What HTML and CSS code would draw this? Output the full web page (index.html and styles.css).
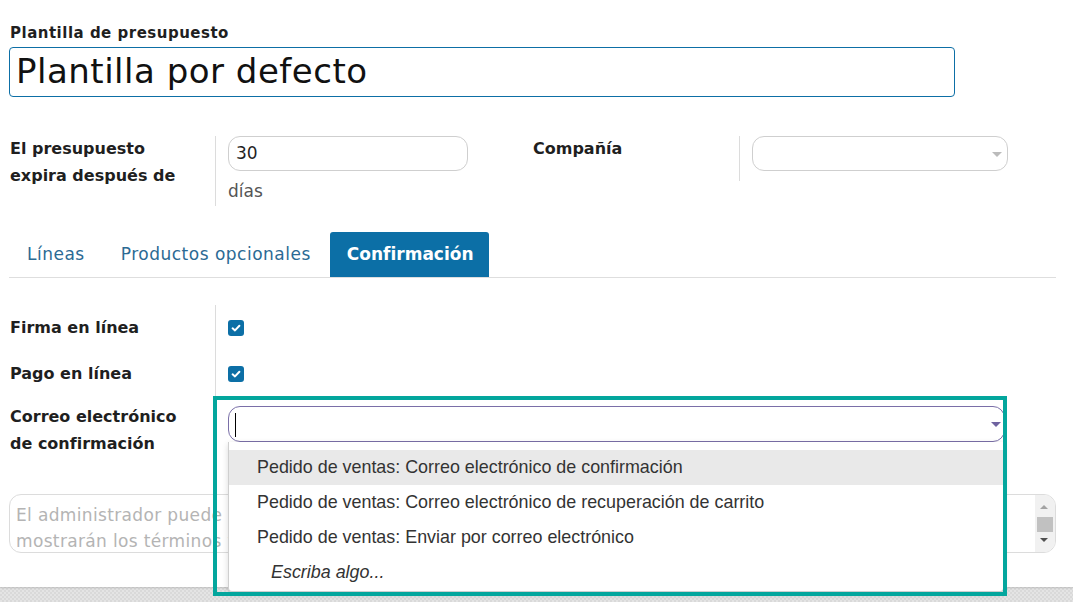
FILE: index.html
```html
<!DOCTYPE html>
<html lang="es">
<head>
<meta charset="utf-8">
<title>Plantilla de presupuesto</title>
<link rel="stylesheet" href="styles.css">
</head>
<body>
<div class="sheet">
  <div class="title-block">
    <div class="title-label">Plantilla de presupuesto</div>
    <div class="title-input">Plantilla por defecto</div>
  </div>

  <div class="group">
    <div class="pair pair-left">
      <div class="lbl">El presupuesto<br>expira después de</div>
      <div class="fld">
        <div class="inp">30</div>
        <div class="unit">días</div>
      </div>
    </div>
    <div class="pair pair-right">
      <div class="lbl">Compañía</div>
      <div class="fld fld-short">
        <div class="inp sel"><span class="caret grey"></span></div>
      </div>
    </div>
  </div>

  <div class="tabs">
    <div class="tab">Líneas</div>
    <div class="tab">Productos opcionales</div>
    <div class="tab active">Confirmación</div>
  </div>

  <div class="rows">
    <div class="row">
      <div class="lbl">Firma en línea</div>
      <div class="fld"><span class="check"><svg viewBox="0 0 16 16" width="16" height="16"><path d="M4.6 8.3 L7 10.4 L11.4 5.8" fill="none" stroke="#fff" stroke-width="2" stroke-linecap="round" stroke-linejoin="round"/></svg></span></div>
    </div>
    <div class="row">
      <div class="lbl">Pago en línea</div>
      <div class="fld"><span class="check"><svg viewBox="0 0 16 16" width="16" height="16"><path d="M4.6 8.3 L7 10.4 L11.4 5.8" fill="none" stroke="#fff" stroke-width="2" stroke-linecap="round" stroke-linejoin="round"/></svg></span></div>
    </div>
    <div class="row row-mail">
      <div class="lbl">Correo electrónico<br>de confirmación</div>
      <div class="fld">
        <div class="combo">
          <div class="combo-input"><span class="cursor"></span><span class="caret purple"></span></div>
          <ul class="menu">
            <li class="hl">Pedido de ventas: Correo electrónico de confirmación</li>
            <li>Pedido de ventas: Correo electrónico de recuperación de carrito</li>
            <li>Pedido de ventas: Enviar por correo electrónico</li>
            <li class="hint">Escriba algo...</li>
          </ul>
        </div>
      </div>
    </div>
  </div>

  <div class="note">
    <div class="note-text">El administrador puede establecer términos y condiciones predeterminados en los ajustes; aquí se<br>mostrarán los términos y condiciones de esta plantilla de presupuesto.</div>
    <div class="scroll">
      <span class="arr up"></span>
      <span class="thumb"></span>
      <span class="arr down"></span>
    </div>
  </div>

  <div class="highlight"></div>
</div>
</body>
</html>
```

FILE: styles.css
```css
* { box-sizing: border-box; }
html, body { margin: 0; padding: 0; }
body {
  width: 1073px;
  height: 602px;
  overflow: hidden;
  font-family: "DejaVu Sans", "Open Sans", sans-serif;
  color: #1f1f1f;
  background-color: #e4e4e4;
  background-image:
    linear-gradient(45deg, #d9d9d9 25%, transparent 25%, transparent 75%, #d9d9d9 75%),
    linear-gradient(45deg, #d9d9d9 25%, transparent 25%, transparent 75%, #d9d9d9 75%);
  background-size: 4px 4px;
  background-position: 0 0, 2px 2px;
}
.sheet {
  position: relative;
  background: #fff;
  height: 587px;
  padding: 22px 17px 0 9px;
  box-shadow: 0 1px 2px rgba(0,0,0,0.15);
}
.title-label {
  font-weight: 700;
  font-size: 15px;
  line-height: 22px;
  padding-left: 1px;
  letter-spacing: 0.5px;
}
.title-input {
  margin-top: 3px;
  width: 946px;
  height: 50px;
  border: 1px solid #0d6fa6;
  border-radius: 4px;
  font-size: 34px;
  line-height: 46px;
  padding-left: 6px;
  letter-spacing: 0.5px;
  color: #111;
}
.group {
  display: flex;
  margin-top: 39px;
  gap: 12px;
}
.pair { display: flex; }
.pair-left { width: 512px; }
.lbl {
  width: 206px;
  flex: none;
  font-weight: 700;
  font-size: 16px;
  line-height: 27px;
  padding-left: 1px;
  margin-top: -1px;
}
.pair-right .lbl { padding-left: 0; }
.fld {
  border-left: 1px solid #dcdcdc;
  padding-left: 12px;
  flex: 1;
}
.pair-left .fld { min-height: 70px; }
.pair-right .fld { height: 45px; }
.inp {
  width: 240px;
  height: 35px;
  border: 1px solid #cfcfcf;
  border-radius: 12px;
  font-size: 17px;
  line-height: 33px;
  padding-left: 7px;
}
.unit {
  font-size: 17px;
  line-height: 24px;
  margin-top: 8px;
  color: #555;
}
.fld-short .inp { width: 256px; }
.sel { position: relative; }
.caret {
  position: absolute;
  width: 0; height: 0;
  border-left: 5px solid transparent;
  border-right: 5px solid transparent;
}
.caret.grey { right: 5px; top: 15px; border-top: 5px solid #bbb; }
.caret.purple { right: 3px; top: 15px; border-top: 5px solid #6f63a0; }

.tabs {
  display: flex;
  margin-top: 26px;
  width: 1047px;
  border-bottom: 1px solid #dedede;
  height: 46px;
}
.tab {
  font-size: 17px;
  line-height: 45px;
  padding: 0 17px;
  color: #2b6a94;
  margin-right: 2px;
  letter-spacing: 0.5px;
}
.tab:first-child { padding-left: 18px; }
.tab.active {
  background: #0c6fa6;
  color: #fff;
  font-weight: 700;
  border-radius: 3px 3px 0 0;
  height: 45px;
  letter-spacing: 0;
  padding: 0 15px 0 17px;
}

.rows { margin-top: 27px; }
.row { display: flex; height: 46px; }
.row .lbl { padding-top: 10px; }
.row .fld { padding-top: 15px; }
.check {
  display: block;
  width: 16px; height: 16px;
  border-radius: 3px;
  background: #0c6fa6;
}
.check svg { display: block; }
.row-mail { height: 97px; }
.row-mail .lbl { padding-top: 7px; }
.row-mail .fld { padding-top: 9px; border-left-color: transparent; }
.combo { position: relative; width: 777px; z-index: 2; }
.combo-input {
  position: relative;
  height: 36px;
  border: 1px solid #7a6fa8;
  border-radius: 12px;
  background: #fff;
}
.cursor {
  position: absolute;
  left: 6px; top: 6px;
  width: 1px; height: 24px;
  background: #000;
}
.menu {
  position: absolute;
  left: 0; top: 36px;
  width: 776px;
  margin: 0;
  padding: 8px 0 1px;
  list-style: none;
  background: #fff;
  border: 1px solid #cfcfcf;
  border-top: none;
  border-radius: 0 0 4px 4px;
  box-shadow: 0 2px 6px rgba(0,0,0,0.15);
  font-family: "Liberation Sans", Arial, sans-serif;
  font-size: 17.9px;
  color: #333;
}
.menu li {
  height: 35px;
  line-height: 35px;
  padding-left: 28px;
}
.menu li.hl { background: #e9e9e9; }
.menu li.hint { font-style: italic; padding-left: 42px; }

.note {
  position: relative;
  width: 1047px;
  height: 59px;
  border: 1px solid #dcdcdc;
  border-radius: 12px;
  overflow: hidden;
}
.note-text {
  font-size: 17px;
  line-height: 26px;
  color: #b4b4b4;
  padding: 7px 0 0 6px;
  white-space: nowrap;
  letter-spacing: 0.35px;
}
.scroll {
  position: absolute;
  right: 0; top: 0;
  width: 20px; height: 57px;
  background: #f1f1f1;
}
.arr {
  position: absolute;
  left: 5px;
  width: 0; height: 0;
  border-left: 4px solid transparent;
  border-right: 4px solid transparent;
}
.arr.up { top: 10px; border-bottom: 4px solid #a3a3a3; }
.arr.down { top: 43px; border-top: 4px solid #505050; }
.thumb {
  position: absolute;
  left: 2px; top: 22px;
  width: 16px; height: 15px;
  background: #c1c1c1;
}
.highlight {
  position: absolute;
  left: 213px; top: 396px;
  width: 794px; height: 200px;
  border: 4px solid #03a69d;
  z-index: 3;
  pointer-events: none;
}
```
